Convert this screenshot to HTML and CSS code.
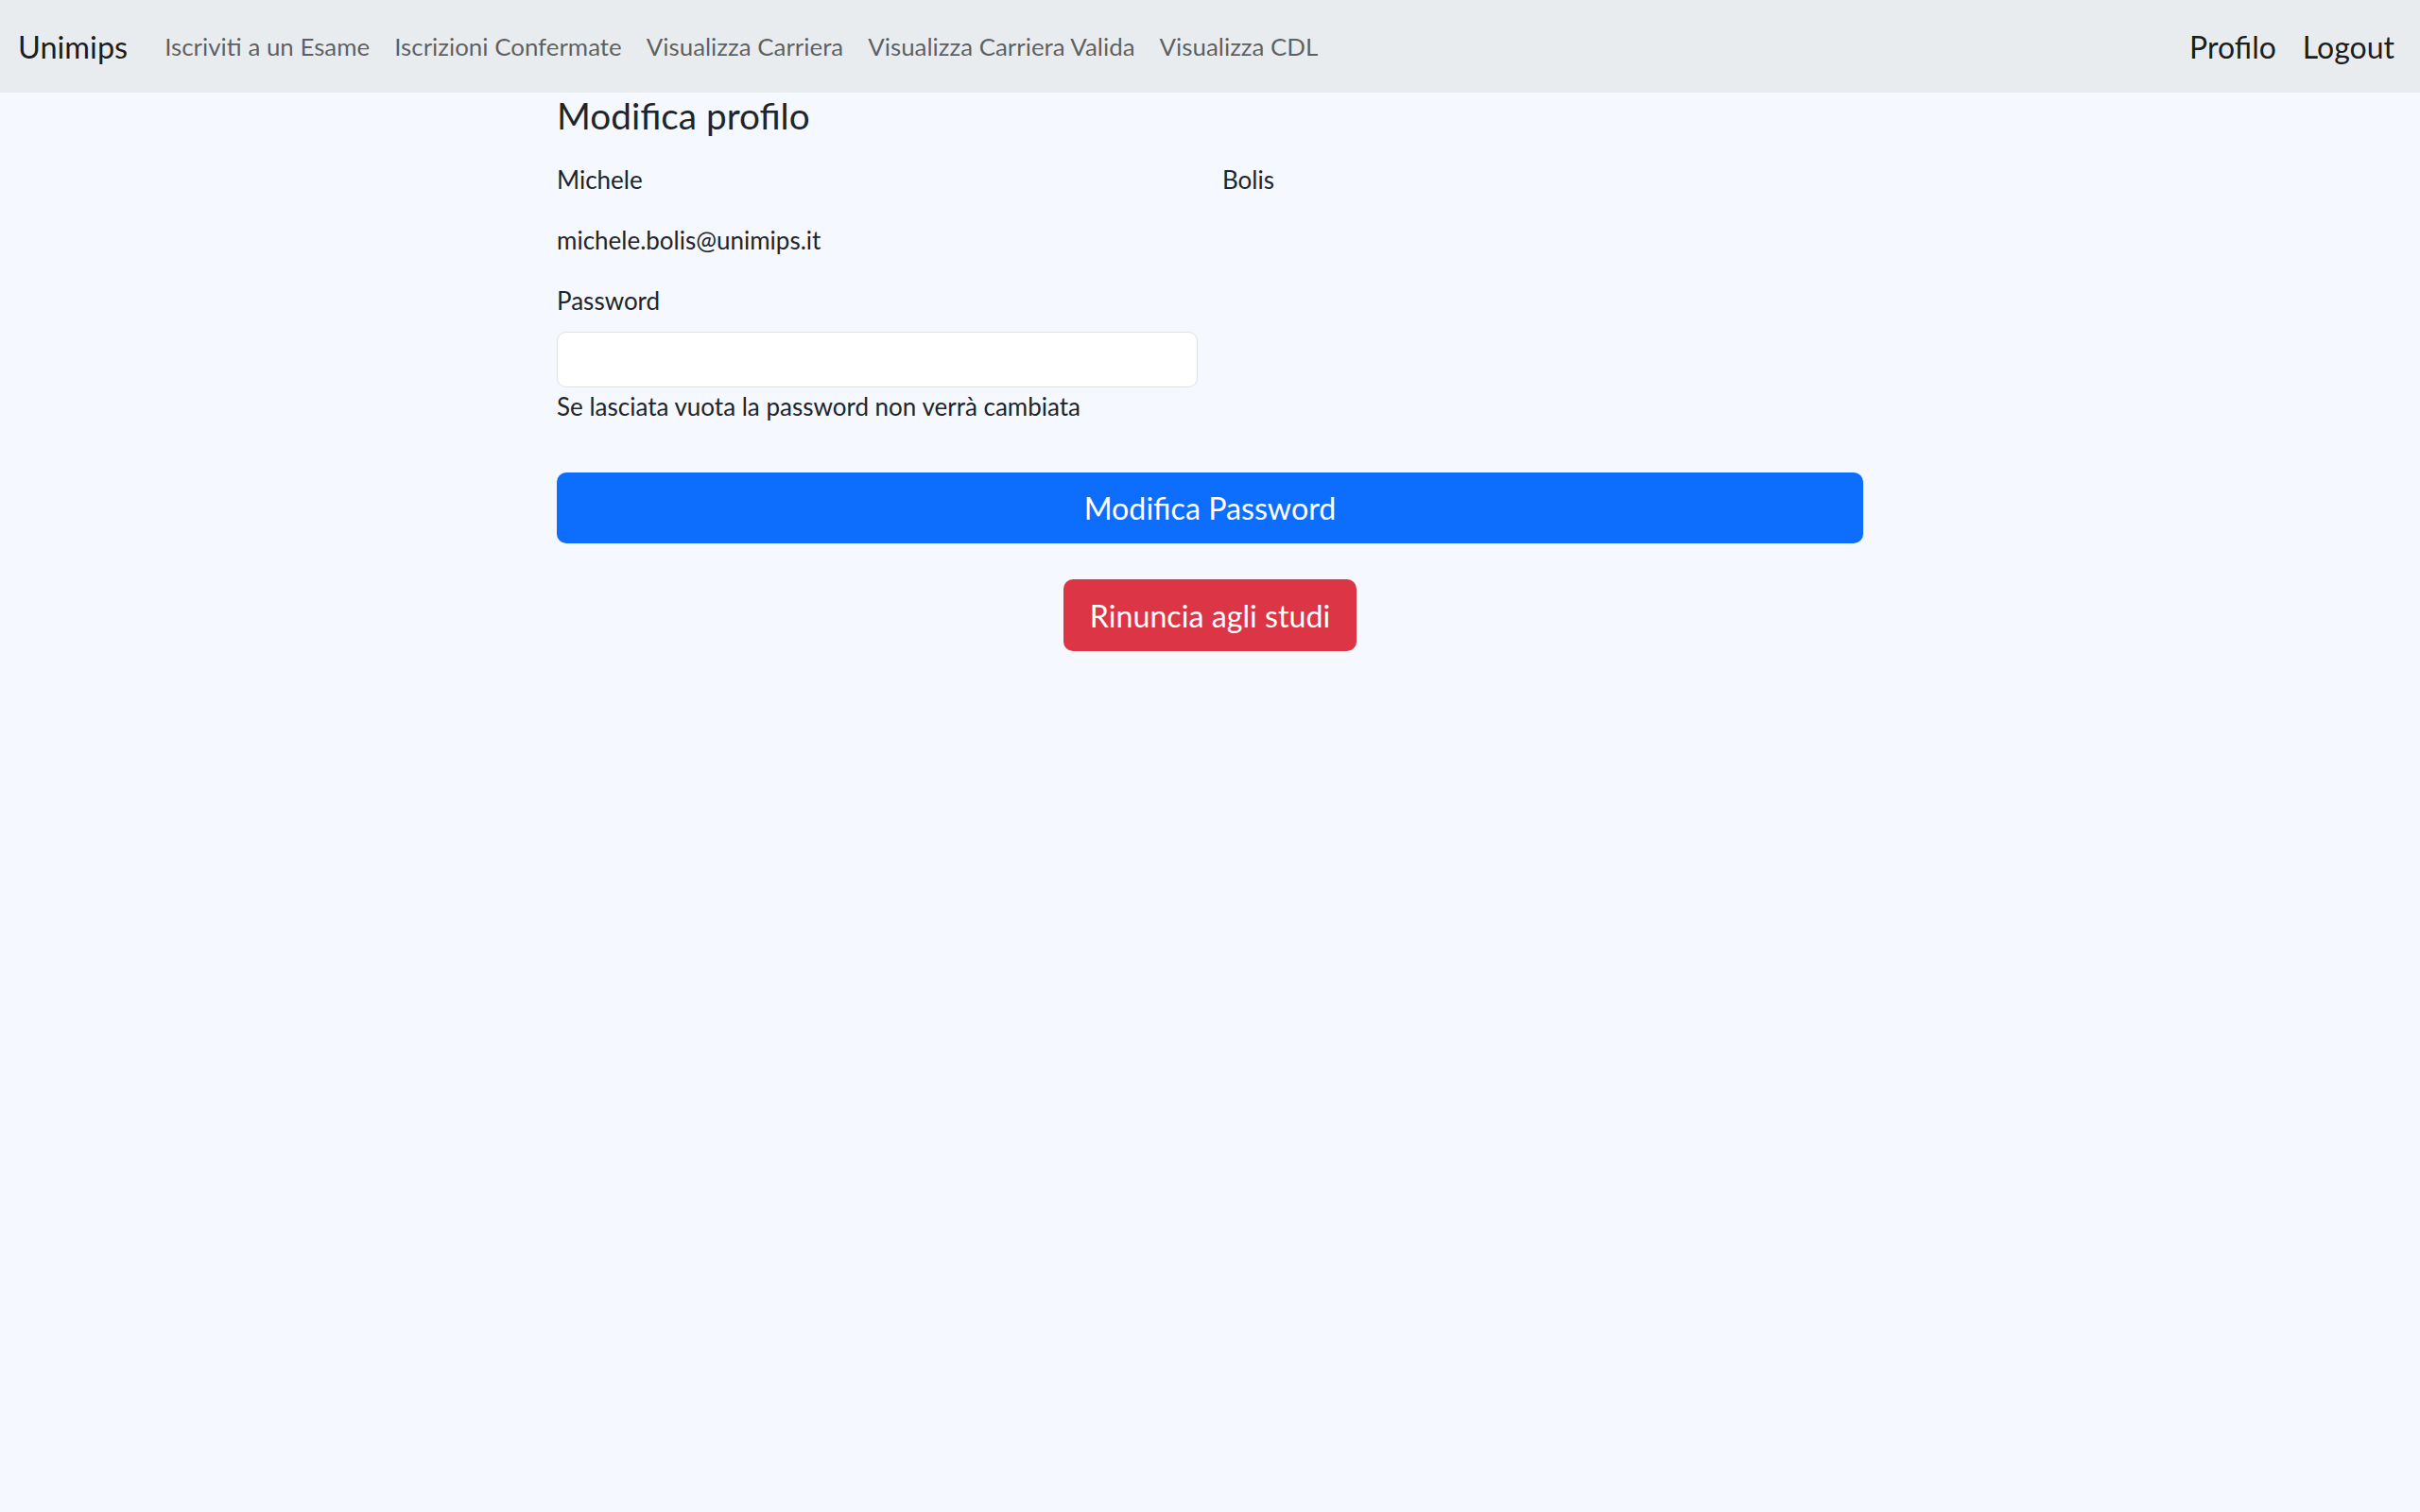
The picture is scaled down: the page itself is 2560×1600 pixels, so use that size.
FILE: index.html
```html
<!DOCTYPE html>
<html lang="it">
<head>
<meta charset="utf-8">
<title>Modifica profilo - Unimips</title>
<link rel="stylesheet" href="styles.css">
</head>
<body>
<nav class="navbar">
  <a class="brand" href="#">Unimips</a>
  <ul class="nav-links">
    <li><a href="#">Iscriviti a un Esame</a></li>
    <li><a href="#">Iscrizioni Confermate</a></li>
    <li><a href="#">Visualizza Carriera</a></li>
    <li><a href="#">Visualizza Carriera Valida</a></li>
    <li><a href="#">Visualizza CDL</a></li>
  </ul>
  <ul class="nav-right">
    <li><a href="#">Profilo</a></li>
    <li><a href="#">Logout</a></li>
  </ul>
</nav>
<main class="container">
  <h4 class="title">Modifica profilo</h4>
  <form class="profile-form">
    <div class="row-2">
      <div class="field-text">Michele</div>
      <div class="field-text">Bolis</div>
    </div>
    <div class="field-text email">michele.bolis@unimips.it</div>
    <div class="row-2">
      <div class="pw-col">
        <label class="field-text label" for="pw">Password</label>
        <input class="form-control" type="password" id="pw">
        <div class="field-text help">Se lasciata vuota la password non verrà cambiata</div>
      </div>
    </div>
    <button type="button" class="btn btn-primary">Modifica Password</button>
    <div class="center">
      <button type="button" class="btn btn-danger">Rinuncia agli studi</button>
    </div>
  </form>
</main>
</body>
</html>
```
FILE: styles.css
```css
* { box-sizing: border-box; }
html, body { margin: 0; padding: 0; }
body {
  background: #f5f9ff;
  font-family: Lato, "Open Sans", sans-serif;
  color: #212529;
  min-height: 1600px;
}
a { text-decoration: none; }
ul { list-style: none; margin: 0; padding: 0; }

.navbar {
  height: 98px;
  background: #e9ecef;
  display: flex;
  align-items: center;
  padding: 0 27px 0 19px;
}
.brand {
  font-size: 32.5px;
  color: rgba(0,0,0,0.9);
  margin-right: 26px;
}
.nav-links {
  display: flex;
  flex: 1;
}
.nav-links a {
  display: block;
  font-size: 25.9px;
  padding: 0 13px;
  color: rgba(0,0,0,0.62);
}
.nav-right {
  display: flex;
  gap: 28px;
}
.nav-right a {
  font-size: 32px;
  color: rgba(0,0,0,0.9);
}

.container {
  width: 1382px;
  margin: 0 auto;
}
.title {
  margin: 0;
  font-size: 38.7px;
  font-weight: 400;
  line-height: 48px;
}
.profile-form {
  display: flex;
  flex-direction: column;
}
.row-2 {
  display: grid;
  grid-template-columns: 678px 677px;
  column-gap: 26px;
}
.field-text {
  font-size: 26px;
  line-height: 40px;
}
.row-2:first-child { margin-top: 24px; }
.email { margin-top: 24px; }
.pw-col { display: flex; flex-direction: column; margin-top: 24px; }
.label { display: block; margin-bottom: 13px; }
.form-control {
  height: 59px;
  width: 100%;
  border: 1px solid #dee2e6;
  border-radius: 10px;
  background: #fff;
  padding: 0 20px;
  font-size: 26px;
}
.help { margin-top: 0; }

.btn {
  border: none;
  color: #fff;
  font-family: Lato, "Open Sans", sans-serif;
  font-size: 32.2px;
  border-radius: 10px;
  cursor: pointer;
}
.btn-primary {
  background: #0d6efd;
  height: 75px;
  width: 100%;
  margin-top: 50px;
}
.center {
  display: flex;
  justify-content: center;
  margin-top: 38px;
}
.btn-danger {
  background: #dc3545;
  height: 76px;
  padding: 0 28px;
}
```
